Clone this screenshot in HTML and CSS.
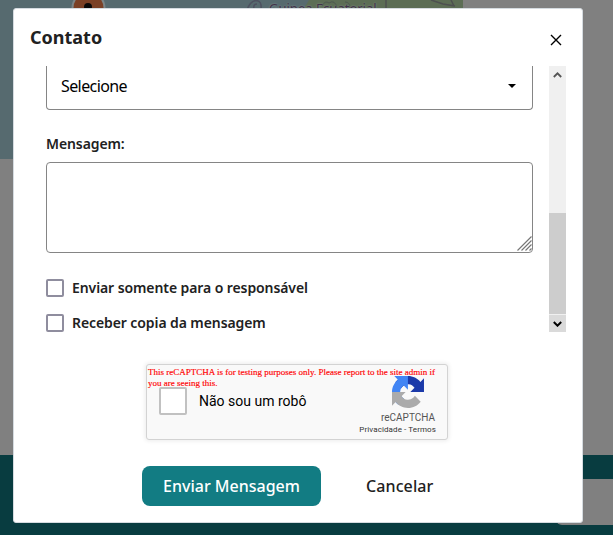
FILE: index.html
```html
<!DOCTYPE html>
<html lang="pt-BR">
<head>
<meta charset="utf-8">
<title>Contato</title>
<link rel="stylesheet" href="styles.css">
</head>
<body>
<div class="backdrop">
  <div class="map">
    <svg class="map-art" width="463" height="10" viewBox="0 0 463 10">
      <circle cx="88.500" cy="8" r="17" fill="#7c8587"/>
      <circle cx="88.500" cy="8" r="15" fill="#7a4025"/>
      <circle cx="88" cy="7" r="4" fill="#090909"/>
      <path d="M309 0h154v10H303Z" fill="#5c6d55"/>
      <path d="M386 0v10M431 0l12 4 12 2M451 0l3 6" fill="none" stroke="#4d5050" stroke-width="1.500"/>
      <path d="M322 6q3-6 7-3 6-4 8 5M345 2q5 0 5 6" fill="none" stroke="#4d5750"/>
      <path d="M247 10q3-9 9-9.500q6 0 5 9M254 9q-1-5 3-5" fill="none" stroke="#4d5160" stroke-width="1.500"/>
    </svg>
    <span class="map-label">Guinea Ecuatorial</span>
  </div>
  <div class="footer"><div class="footer-box"></div></div>
</div>
<main class="modal">
  <header class="modal-header">
    <h1>Contato</h1>
    <svg class="close" width="12" height="12" viewBox="0 0 12 12"><path d="M1 1l10 10M11 1L1 11" stroke="#000" stroke-width="1.400"/></svg>
  </header>
  <div class="modal-body">
    <form class="fields">
      <div class="select"><span>Selecione</span><svg width="8" height="4" viewBox="0 0 8 4"><path d="M0 0h8L4 4Z"/></svg></div>
      <div class="label">Mensagem:</div>
      <div class="textarea"><svg width="15" height="15" viewBox="0 0 15 15"><path d="M0.500 14.500l14-14M4.500 14.500l10-10M8.500 14.500l6-6M12.500 14.500l2-2" stroke="#777" stroke-width="1.200"/></svg></div>
      <div class="check first"><i></i><span>Enviar somente para o responsável</span></div>
      <div class="check"><i></i><span>Receber copia da mensagem</span></div>
    </form>
    <div class="scrollbar">
      <div class="arrow"><svg width="9" height="6" viewBox="0 0 9 6"><path d="M0.800 5L4.500 1.300L8.200 5" fill="none" stroke="#555" stroke-width="1.800"/></svg></div>
      <div class="track"><div class="thumb"></div></div>
      <div class="arrow down"><svg width="9" height="6" viewBox="0 0 9 6"><path d="M0.800 1L4.500 4.700L8.200 1" fill="none" stroke="#000" stroke-width="2"/></svg></div>
    </div>
  </div>
  <section class="captcha">
    <p class="warning">This reCAPTCHA is for testing purposes only. Please report to the site admin if<br>you are seeing this.</p>
    <div class="robot"><i></i><span>Não sou um robô</span></div>
    <div class="brand">
      <svg width="32" height="32" viewBox="0 0 64 64">
        <path fill="#1c3aa9" d="M64 31.955l-.033-1.370V4.687l-7.160 7.160C50.948 4.674 42.033.093 32.050.093c-10.400 0-19.622 4.960-25.458 12.640l11.736 11.860a15.550 15.550 0 0 1 4.754-5.334c2.050-1.600 4.952-2.906 8.968-2.906.485 0 .860.057 1.135.163 4.976.393 9.288 3.140 11.828 7.124l-8.307 8.307L64 31.953"/>
        <path fill="#4285f4" d="M31.862.094l-1.370.033H4.594l7.160 7.160C4.580 13.147 0 22.060 0 32.046c0 10.400 4.960 19.622 12.640 25.458L24.500 45.768a15.550 15.550 0 0 1-5.334-4.754c-1.600-2.050-2.906-4.952-2.906-8.968 0-.485.057-.860.163-1.135.393-4.976 3.140-9.288 7.124-11.828l8.307 8.307L31.860.095"/>
        <path fill="#ababab" d="M.001 32.045l.033 1.370v25.898l7.160-7.160c5.860 7.173 14.774 11.754 24.760 11.754 10.400 0 19.622-4.960 25.458-12.640l-11.736-11.860a15.550 15.550 0 0 1-4.754 5.334c-2.050 1.600-4.952 2.906-8.968 2.906-.485 0-.860-.057-1.135-.163-4.976-.393-9.288-3.140-11.828-7.124l8.307-8.307L0 32.047"/>
      </svg>
      <div class="brand-name">reCAPTCHA</div>
      <div class="brand-links">Privacidade - Termos</div>
    </div>
  </section>
  <div class="actions">
    <button class="send" type="button"><span>Enviar Mensagem</span></button>
    <button class="cancel" type="button"><span>Cancelar</span></button>
  </div>
</main>
</body>
</html>
```
FILE: styles.css
```css
* { box-sizing: border-box; }
body { margin: 0; width: 613px; height: 535px; overflow: hidden; font-family: "Noto Sans", sans-serif; color: #212121; }
.backdrop { position: absolute; inset: 0; background: #808080; display: flex; flex-direction: column; justify-content: space-between; overflow: hidden; }
.map { position: relative; width: 463px; height: 159px; background: #566a6f; }
.map-art { display: block; }
.map-label { position: absolute; left: 269px; top: 0; font-size: 13px; line-height: 16px; white-space: nowrap; color: #41324a; text-shadow: 0 0 2px #8a9794; }
.footer { height: 80px; background: #083c40; display: flex; justify-content: flex-end; padding-top: 24px; }
.footer-box { width: 57px; height: 46px; background: #808080; border-radius: 0 0 0 6px; }
.modal { position: relative; margin: 8px 0 0 13px; width: 570px; height: 515px; background: #fff; border: 1px solid #d5dbe0; border-radius: 3px; display: flex; flex-direction: column; }
.modal-header { height: 57px; flex: none; display: flex; justify-content: space-between; padding: 15px 20px 0 16px; }
h1 { margin: 0; font-size: 18px; line-height: 26px; font-weight: 700; }
.close { margin-top: 10px; }
.modal-body { height: 266px; flex: none; overflow: hidden; display: flex; justify-content: space-between; padding: 0 16px 0 32px; }
.fields { width: 487px; }
.select { height: 44px; border: 1px solid #858585; border-top: 0; border-radius: 0 0 4px 4px; display: flex; align-items: center; justify-content: space-between; padding: 0 16px 3px 14px; font-size: 16px; line-height: 22px; letter-spacing: -0.6px; color: #000; }
.label { margin: 24px 0 8px; font-size: 14px; line-height: 20px; font-weight: 600; letter-spacing: -0.1px; }
.textarea { height: 91px; border: 1px solid #858585; border-radius: 4px; display: flex; justify-content: flex-end; align-items: flex-end; padding: 0 0 1px 0; }
.check { display: flex; align-items: center; gap: 8px; height: 18px; margin-top: 17px; font-size: 14px; font-weight: 600; letter-spacing: -0.09px; }
.check.first { margin-top: 26px; }
.check span { padding-bottom: 2px; }
.check i { width: 18px; height: 18px; border: 2px solid #8f8d9e; border-radius: 2px; }
.scrollbar { width: 17px; display: flex; flex-direction: column; background: #f0f0f0; }
.arrow { height: 17px; display: flex; align-items: center; justify-content: center; }
.down { background: #dadada; }
.track { flex: 1; display: flex; flex-direction: column; justify-content: flex-end; padding-bottom: 1px; }
.thumb { height: 101px; background: #cdcdcd; }
.captcha { position: relative; flex: none; width: 302px; height: 76px; margin: 32px 0 0 132px; border: 1px solid #d3d3d3; border-radius: 3px; background: #f9f9f9; box-shadow: 0 0 4px 1px rgba(0,0,0,.08); display: flex; justify-content: space-between; }
.warning { position: absolute; left: 1px; top: 2px; z-index: 1; margin: 0; font: 9px/11px "Liberation Serif", serif; color: #f00; white-space: nowrap; -webkit-text-stroke: 0.15px #f00; }
.robot { display: flex; align-items: center; gap: 12px; padding: 0 0 2px 12px; font: 14px Roboto, sans-serif; color: #000; }
.robot i { width: 28px; height: 28px; border: 2px solid #c1c1c1; border-radius: 2px; background: #fff; }
.brand { display: flex; flex-direction: column; align-items: flex-end; padding: 10px 12px 0 0; font-family: Roboto, sans-serif; color: #555; }
.brand svg { margin: 1px 11px 0 0; }
.brand-name { margin-top: 4px; font-size: 10px; line-height: 12px; }
.brand-links { font-size: 8px; line-height: 10px; margin: 1px -1px 0 0; letter-spacing: 0.1px; color: #333; }
.actions { display: flex; margin: 26px 0 0 128px; gap: 45px; }
button { font: 500 16px/22px "Noto Sans", sans-serif; border: 0; padding: 0; height: 40px; }
.send { width: 179px; border-radius: 8px; background: #127c83; color: #fff; }
.cancel { background: none; color: #212121; letter-spacing: 0.1px; }
```
